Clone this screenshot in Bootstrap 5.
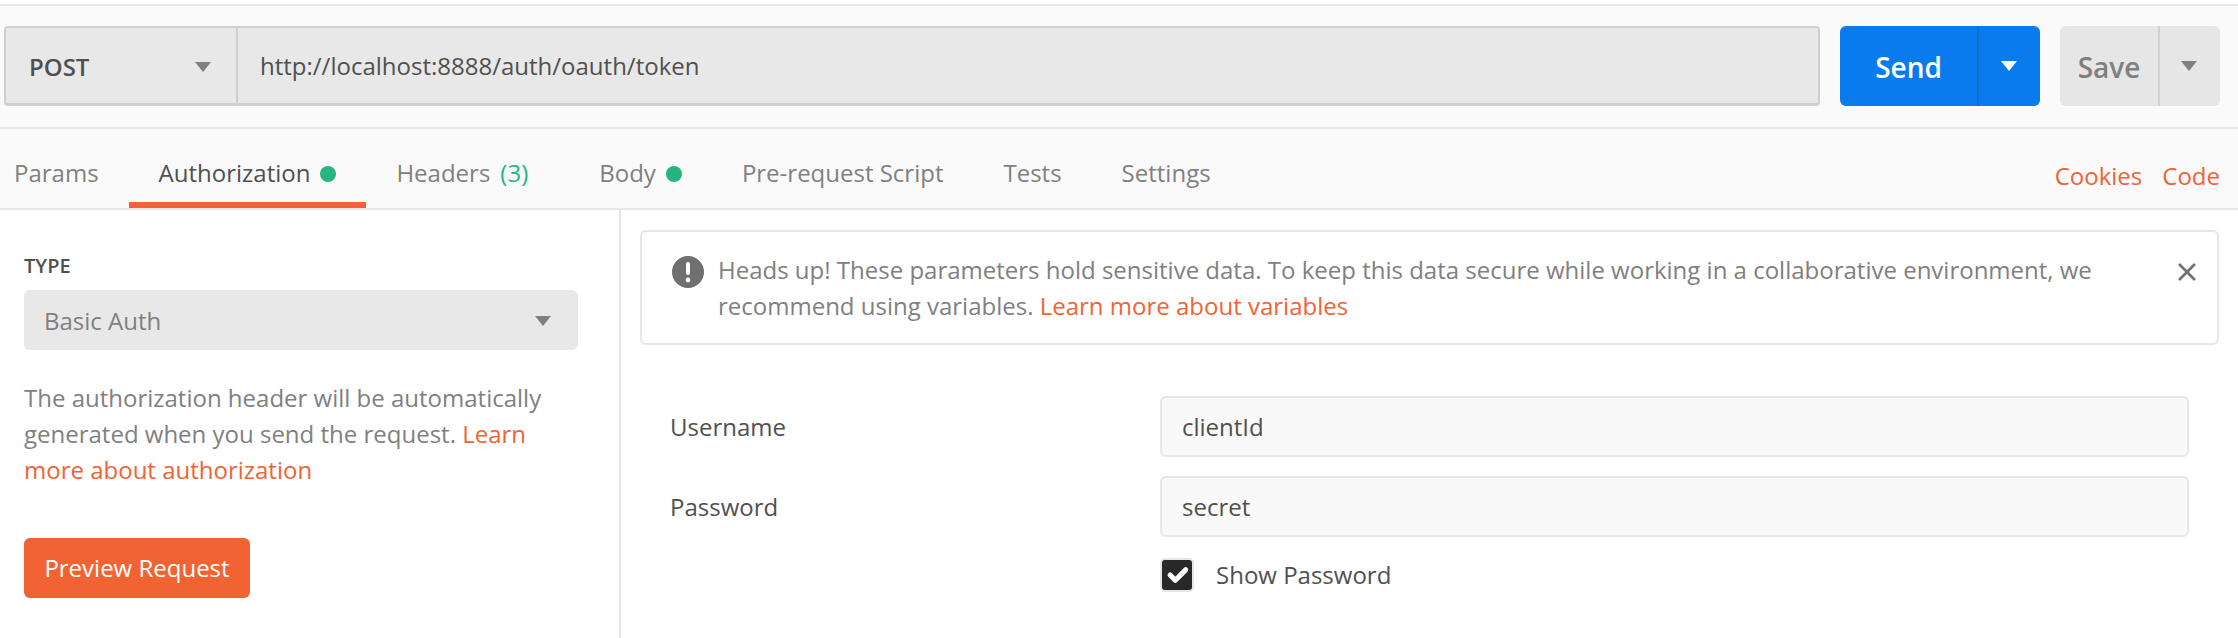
<!DOCTYPE html>
<html lang="en">
<head>
    <meta charset="UTF-8">
    <title>Postman request</title>
    <link href="https://cdn.jsdelivr.net/npm/bootstrap@5.3.0/dist/css/bootstrap.min.css" rel="stylesheet">
    <style>
        html, body { height: 100%; overflow: hidden; }
        body { font-family: "Open Sans", sans-serif; font-size: 24px; color: #808080; background: #fff; }
        a { text-decoration: none; color: #f26334; }
        .top-gap { height: 4px; border-bottom: 2px solid #e6e6e6; box-sizing: content-box; }
        .req-bar { height: 123px; background: #fafafa; padding: 20px 18px 0 4px; border-bottom: 2px solid #e6e6e6; }
        .req-input { width: 1816px; height: 80px; background: #e8e8e8; border: 2px solid #d0d0d0; border-width: 2px 2px 3px 2px; border-radius: 4px; }
        .method { width: 232px; border-right: 2px solid #d0d0d0; padding: 2px 25px 0 23px; font-weight: 600; color: #505050; }
        .url { padding-left: 22px; color: #505050; }
        .split-btn { height: 80px; border-radius: 6px; font-size: 28px; font-weight: 600; }
        .split-btn .lbl { height: 100%; padding-top: 2px; }
        .split-btn .arr { height: 100%; }
        .send-btn { width: 200px; margin-left: 20px; background: #097bed; color: #fff; }
        .send-btn .lbl { width: 139px; border-right: 2px solid #0a6ed2; }
        .send-btn .arr { width: 61px; padding-right: 2px; }
        .save-btn { width: 160px; margin-left: 20px; background: #e6e6e6; color: #808080; }
        .save-btn .lbl { width: 100px; border-right: 2px solid #d0d0d0; }
        .save-btn .arr { width: 60px; padding-right: 3px; }
        .caret-tri { width: 0; height: 0; border-left: 8px solid transparent; border-right: 8px solid transparent; border-top: 10px solid #808080; }
        .caret-white { border-top-color: #fff; }
        .tab-bar { height: 81px; background: #fafafa; border-bottom: 2px solid #e6e6e6; }
        .tab-item { height: 79px; padding: 9px 30px 0; color: #808080; }
        .tab-item:first-child { padding-left: 14px; }
        .tab-item.on { color: #505050; border-bottom: 6px solid #f26334; padding-top: 15px; }
        .tab-wide { margin-right: 11px; }
        .dot-green { width: 16px; height: 16px; border-radius: 50%; background: #26b47f; margin-left: 10px; margin-top: 1px; }
        .count-green { color: #26b47f; margin-left: 10px; }
        .side-links { padding: 15px 18px 0 0; gap: 20px; }
        .body-wrap { height: 428px; }
        .auth-side { width: 621px; border-right: 2px solid #e6e6e6; padding: 43px 41px 0 24px; }
        .type-lbl { font-size: 20px; font-weight: 600; color: #505050; line-height: 26px; margin-bottom: 11px; }
        .type-select { height: 60px; background: #e8e8e8; border-radius: 6px; padding: 1px 27px 0 20px; }
        .help-txt { line-height: 36px; margin: 30px 0 50px; }
        .preview-btn { width: 226px; height: 60px; background: #f26334; color: #fff; border-radius: 6px; font-size: 24px; padding: 0; border: 0; }
        .auth-main { flex: 1; padding: 20px 19px 0 19px; }
        .notice { height: 115px; border: 2px solid #e6e6e6; border-radius: 6px; padding: 20px 21px 0 30px; line-height: 36px; }
        .notice-text { width: 1445px; margin-left: 14px; }
        .notice-icon { flex: none; margin-top: 4px; }
        .close-x { flex: none; margin-left: auto; margin-top: 11px; }
        .field-row { margin-top: 19px; height: 61px; padding-left: 30px; color: #505050; }
        .field-row.first { margin-top: 51px; }
        .field-lbl { width: 490px; }
        .field-input.form-control { width: 1029px; height: 61px; background: #f9f9f9; border: 2px solid #e6e6e6; border-radius: 6px; font-size: 24px; color: #505050; padding: 0 20px 0 20px; font-family: inherit; }
        .show-row { padding-left: 520px; margin-top: 20px; color: #505050; }
        .show-row .form-check-input { width: 34px; height: 34px; margin: 0 22px 0 0; background-color: #282828; border: 2px solid #e6e6e6; border-radius: 5px; background-size: 115%; }
    </style>
</head>
<body>
    <div class="top-gap"></div>
    <div class="req-bar d-flex align-items-start">
        <div class="req-input d-flex">
            <div class="method d-flex align-items-center justify-content-between"><span>POST</span><span class="caret-tri"></span></div>
            <div class="url d-flex align-items-center">http://localhost:8888/auth/oauth/token</div>
        </div>
        <div class="split-btn send-btn d-flex">
            <div class="lbl d-flex align-items-center justify-content-center">Send</div>
            <div class="arr d-flex align-items-center justify-content-center"><span class="caret-tri caret-white"></span></div>
        </div>
        <div class="split-btn save-btn d-flex">
            <div class="lbl d-flex align-items-center justify-content-center">Save</div>
            <div class="arr d-flex align-items-center justify-content-center"><span class="caret-tri"></span></div>
        </div>
    </div>

    <div class="tab-bar d-flex justify-content-between">
        <div class="d-flex">
            <div class="tab-item d-flex align-items-center">Params</div>
            <div class="tab-item on d-flex align-items-center">Authorization<span class="dot-green"></span></div>
            <div class="tab-item tab-wide d-flex align-items-center">Headers<span class="count-green">(3)</span></div>
            <div class="tab-item d-flex align-items-center">Body<span class="dot-green"></span></div>
            <div class="tab-item d-flex align-items-center">Pre-request Script</div>
            <div class="tab-item d-flex align-items-center">Tests</div>
            <div class="tab-item d-flex align-items-center">Settings</div>
        </div>
        <div class="side-links d-flex align-items-center">
            <a href="#">Cookies</a>
            <a href="#">Code</a>
        </div>
    </div>

    <div class="body-wrap d-flex">
        <div class="auth-side">
            <div class="type-lbl">TYPE</div>
            <div class="type-select d-flex align-items-center justify-content-between"><span>Basic Auth</span><span class="caret-tri"></span></div>
            <p class="help-txt">The authorization header will be automatically generated when you send the request. <a href="#">Learn more about authorization</a></p>
            <button type="button" class="btn preview-btn">Preview Request</button>
        </div>
        <div class="auth-main">
            <div class="notice d-flex align-items-start">
                <svg class="notice-icon" width="32" height="32" viewBox="0 0 32 32"><circle cx="16" cy="16" r="16" fill="#707070"/><rect x="14" y="6" width="4" height="13" rx="2" fill="#fff"/><circle cx="16" cy="24" r="2.4" fill="#fff"/></svg>
                <div class="notice-text">Heads up! These parameters hold sensitive data. To keep this data secure while working in a collaborative environment, we recommend using variables. <a href="#">Learn more about variables</a></div>
                <svg class="close-x" width="18" height="18" viewBox="0 0 18 18"><path d="M1 1L17 17M17 1L1 17" stroke="#707070" stroke-width="2.6" fill="none"/></svg>
            </div>
            <div class="field-row first d-flex align-items-center">
                <div class="field-lbl">Username</div>
                <input type="text" class="form-control field-input" value="clientId">
            </div>
            <div class="field-row d-flex align-items-center">
                <div class="field-lbl">Password</div>
                <input type="text" class="form-control field-input" value="secret">
            </div>
            <div class="show-row d-flex align-items-center">
                <input class="form-check-input" type="checkbox" checked>
                <span>Show Password</span>
            </div>
        </div>
    </div>

    <script src="https://cdn.jsdelivr.net/npm/bootstrap@5.3.0/dist/js/bootstrap.bundle.min.js"></script>
</body>
</html>
